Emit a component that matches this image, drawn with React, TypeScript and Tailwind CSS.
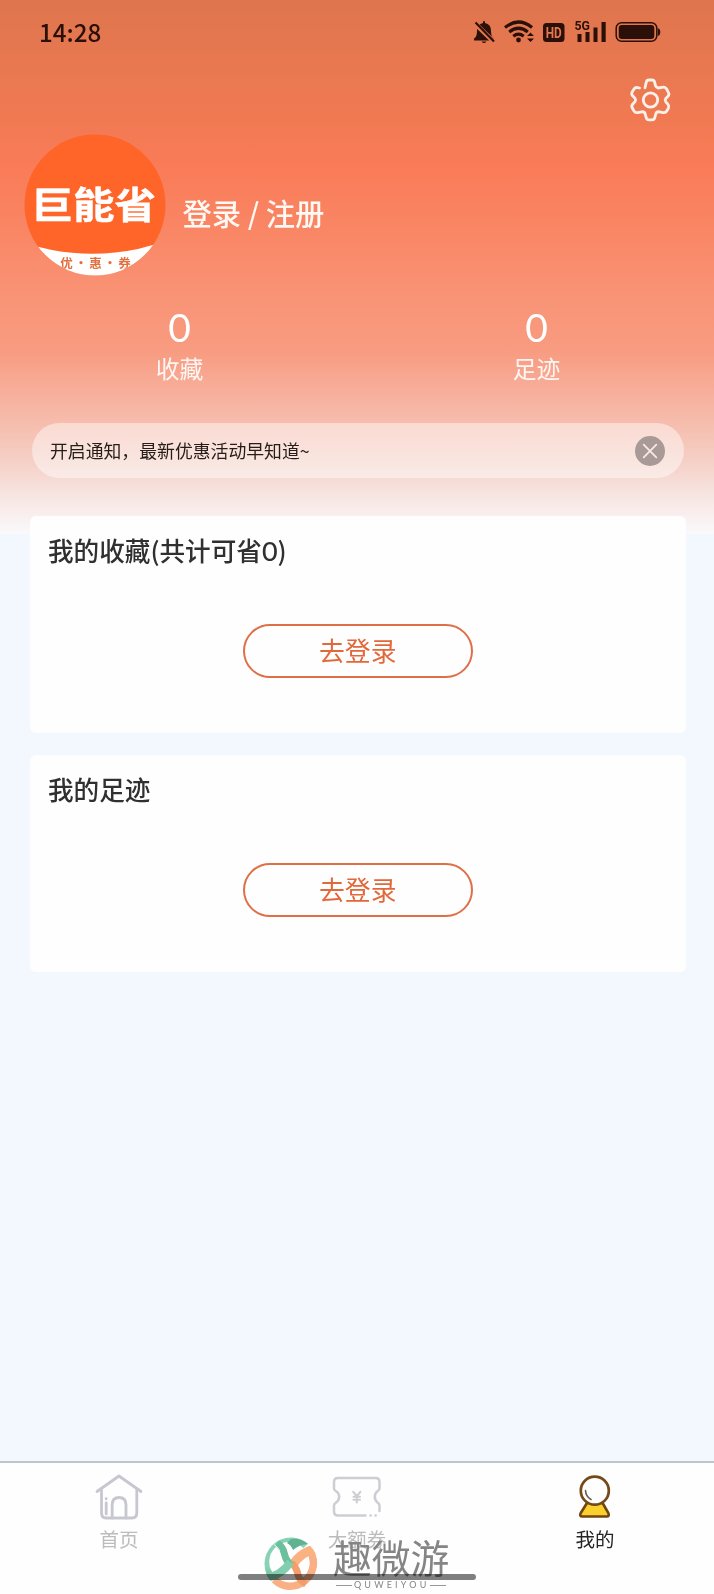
import { ReactNode } from 'react';

const GearIcon = () => (
  <svg width="44" height="44" viewBox="0 0 44 44" fill="none" stroke="#fdf1ea" strokeWidth="2.8" strokeLinecap="round" strokeLinejoin="round">
    <path d="M17 9.8 L18.2 4.4 Q18.7 2 21 2 H24 Q26.3 2 26.7 4.4 L27.3 7.2 Q28 9.6 30.4 10 L35.4 9.2 Q37.4 9 38.6 11 L40.4 14.4 Q41.6 16.4 40 18.2 L37.8 20.4 Q36.6 22 37.8 23.8 L40 26.4 Q41.4 28.2 40.4 30.2 L38.8 33 Q37.6 35 35.2 34.6 L31.4 33.8 Q28.6 33.4 27.8 36 L26.8 39.6 Q26.2 41.8 24 41.8 H21 Q18.8 41.8 18.2 39.6 L17.2 36 Q16.4 33.4 13.8 33.8 L9.6 34.6 Q7.2 35 6 33 L4.2 29.8 Q3.2 27.8 4.8 26 L7 23.6 Q8.2 22 7 20.2 L4.6 17.8 Q3 16 4.2 14 L6 11 Q7.2 9.2 9.6 9.6 L11.6 10" />
    <circle cx="22.5" cy="22" r="7.2" />
  </svg>
);

const StatusIcons = () => (
  <svg width="190" height="28" viewBox="0 -2 190 28" fill="#2b1009">
    <path d="M1 20.5 V18.5 Q4 17 4 11 Q4 4 10 3 V1.5 Q11 .5 12 1.5 V3 Q18 4 18 11 Q18 17 21 18.5 V20.5 Z" />
    <path d="M8.5 21.5 h5 q-2.5 3 -5 0z" />
    <path d="M2 3.5 L20.5 21.5" stroke="#e6784f" strokeWidth="4.6" />
    <path d="M2.5 2.5 L21 21.5" stroke="#2b1009" strokeWidth="2.2" />
    <g fill="none" stroke="#2b1009" strokeWidth="3.2">
      <path d="M32 7.5 Q45.5 -3.5 59 7.5" />
      <path d="M36.2 12 Q45.5 4.5 54.8 12" />
      <path d="M40.3 16.2 Q45.5 12.2 50.7 16.2" />
    </g>
    <circle cx="45.5" cy="20" r="2.4" />
    <path d="M54 16 L57.5 12.5 L61 16 Z M54 18.5 L57.5 22 L61 18.5 Z" />
    <rect x="70" y="3" width="21.5" height="19" rx="3.5" />
    <text x="80.7" y="17.5" textAnchor="middle" fontSize="14" fontWeight="700" textLength="16" lengthAdjust="spacingAndGlyphs" fill="#e6784f" className="font-['Roboto',sans-serif]">HD</text>
    <text x="101.5" y="9.8" fontSize="13.5" fontWeight="700" textLength="15.5" lengthAdjust="spacingAndGlyphs" className="font-['Roboto',sans-serif]">5G</text>
    <path d="M104.5 14 h4 v8 h-4z M112.5 12 h4 v10 h-4z M120.5 7.5 h4 v14.5 h-4z M128.5 2 h4.2 v20 h-4.2z" />
    <rect x="143.2" y="2.7" width="40.6" height="18.6" rx="5.5" fill="none" stroke="#2b1009" strokeWidth="1.5" />
    <rect x="145.7" y="5" width="35.6" height="14" rx="3.2" />
    <path d="M184.8 8 q2.6 1 2.6 4 t-2.6 4z" />
  </svg>
);

const HomeIcon = () => (
  <svg width="48" height="46" viewBox="0 0 48 46" fill="none" stroke="#c7c7d1" strokeWidth="2.8" strokeLinecap="round" strokeLinejoin="round">
    <path d="M2 17.5 L24 2 L46 17.5" />
    <path d="M6.5 16 V38.5 Q6.5 44 11 44 H37 Q41.8 44 41.8 38.5 V16" />
    <path d="M17.2 44 V31 Q17.2 23.5 24 23.5 Q31 23.5 31 31 V44" />
    <path d="M11.2 29 V40" />
    <path d="M11.2 24.6 V24.8" />
  </svg>
);

const CouponIcon = () => (
  <svg width="50" height="42" viewBox="0 0 50 42" fill="none" stroke="#cdcdd3" strokeWidth="2.5" strokeLinecap="round" strokeLinejoin="round">
    <path d="M33.5 39.5 H6 Q2 39.5 2 35.5 V29.5 Q2 28 3.5 27 Q7.2 24.4 7.2 20.8 Q7.2 17 3.5 14.8 Q2 13.8 2 12.5 V6 Q2 2 6 2 H43.5 Q47.5 2 47.5 6 V12.5 Q47.5 13.8 46 14.8 Q42.8 17 42.8 20.8 Q42.8 24.4 46 27 Q47.5 28 47.5 29.5 V35" />
    <path d="M38.5 39.5 h.2 M43.5 39.5 h.2" />
    <path d="M21.2 15.8 L24.8 20.2 L28.4 15.8 M24.8 20.5 V26.5 M21.5 20.8 H28 M21.5 23.8 H28" strokeWidth="2.1" />
  </svg>
);

const MineIcon = () => (
  <svg width="34" height="44" viewBox="0 0 34 44" fill="none" strokeLinejoin="round">
    <path d="M9 28 L2.6 38.2 Q1.3 41.5 4.3 41.5 H28.7 Q31.7 41.5 30.4 38.2 L24.6 28 Z" fill="#fbd02c" stroke="#6f4510" strokeWidth="2.6" />
    <circle cx="16.8" cy="15.7" r="14" fill="#fff" stroke="#75491a" strokeWidth="2.7" />
    <path d="M7.5 15.5 Q7.8 21.5 13 24.5" stroke="#6b5a4c" strokeWidth="1.6" strokeLinecap="round" />
  </svg>
);

const Swirl = () => (
  <svg width="54" height="54" viewBox="0 0 54 54" fill="none">
    <defs>
      <linearGradient id="green" gradientUnits="userSpaceOnUse" x1="10" y1="4" x2="16" y2="46">
        <stop offset="0" stopColor="#86d3b3" />
        <stop offset=".6" stopColor="#8ad2b6" />
        <stop offset="1" stopColor="#5fa888" />
      </linearGradient>
      <clipPath id="disc">
        <circle cx="27" cy="27" r="26.5" />
      </clipPath>
    </defs>
    <g clipPath="url(#disc)">
      {/* orange half */}
      <path d="M46 13.5 A23.5 23.5 0 0 1 10 43" stroke="#f9b084" strokeWidth="7.5" />
      <path d="M53 12 Q37 14 28 29" stroke="#fbb283" strokeWidth="9" />
      <path d="M27.5 26 Q33 31 34 38 Q36 44 42 47" stroke="#f39c6c" strokeWidth="7" />
      {/* green half */}
      <path d="M8 41 A23.5 23.5 0 0 1 42 8.5" stroke="url(#green)" strokeWidth="7.5" />
      <path d="M27 2 Q37 1 44 7 Q36 7 29 13 Q27 8 23 6 Z" fill="#5fb391" />
      <path d="M13 6 Q19 10 20.5 17 Q22 24 27 28" stroke="#6abf9c" strokeWidth="7" />
      <path d="M1 41 Q17 39 26.5 25" stroke="#84ceb0" strokeWidth="8" />
      <path d="M10 7.5 Q14 10 16 14" stroke="#e3f5ed" strokeWidth="1" />
    </g>
  </svg>
);

const Avatar = () => (
  <svg width="142" height="142" viewBox="0 0 142 142">
    <defs>
      <clipPath id="avatar">
        <circle cx="71" cy="71" r="70.5" />
      </clipPath>
    </defs>
    <g clipPath="url(#avatar)">
      <rect width="142" height="142" fill="#ff6428" />
      <path d="M0 109 Q14 113 28 116 Q71 124 114 115 Q128 112 142 106 V142 H0 Z" fill="#fff" />
      <text x="7.5" y="85" fontSize="37" fontWeight="700" fill="#fff" stroke="#fff" strokeWidth=".4" textLength="124.5" lengthAdjust="spacingAndGlyphs">巨能省</text>
      <g fontSize="12.5" fontWeight="700" fill="#e0703f" textAnchor="middle">
        <text x="42.5" y="134">优</text>
        <text x="57" y="134">·</text>
        <text x="71.5" y="134">惠</text>
        <text x="86" y="134">·</text>
        <text x="100.5" y="134">券</text>
      </g>
    </g>
  </svg>
);

const Stat = ({ value, label }: { value: number; label: string }) => (
  <div className="flex w-1/2 flex-col items-center pl-0.5 text-white">
    <span className="text-[39px] leading-[42px] font-['Lato',sans-serif]">{value}</span>
    <span className="mt-[5px] text-[23.8px] leading-[30px] opacity-90">{label}</span>
  </div>
);

const Card = ({ title }: { title: ReactNode }) => (
  <section className="flex h-[217px] flex-col items-center rounded-md bg-[#fefefe]">
    <h2 className="mt-[18px] w-full pl-[18.5px] text-[25.6px] leading-[32px] font-medium text-[#303030]">{title}</h2>
    <button className="mt-[58px] flex h-[54px] w-[230px] items-center justify-center rounded-full border-2 border-[#de6f47] pb-[3px] text-[25.8px] leading-none text-[#e2683a]">
      去登录
    </button>
  </section>
);

const Tab = ({ label, icon, active }: { label: string; icon: ReactNode; active?: boolean }) => (
  <div className="flex w-1/3 flex-col items-center pt-2.5">
    <div className="flex h-[48px] items-center">{icon}</div>
    <span className={`mt-[5px] text-[19.5px] leading-[26px] ${active ? 'text-[#252525]' : 'text-[#bcbcbc]'}`}>{label}</span>
  </div>
);

const App = () => {
  return (
    <div className="relative flex h-[1594px] w-[714px] flex-col overflow-hidden bg-[#f3f7fe] font-['Noto_Sans_CJK_SC',sans-serif]">
      <header className="h-[534px] shrink-0 bg-[linear-gradient(180deg,#de754e_0px,#e77850_60px,#f07952_115px,#fa7c58_170px,#f98665_230px,#f99375_295px,#f89b80_350px,#f7b09d_395px,#f6beae_425px,#f5d2c9_465px,#f6e2dd_490px,#f9efef_515px,#faf9fb_534px)]">
        <div className="flex h-[64px] items-center justify-between pr-[51px] pl-[39px]">
          <span className="text-[24.2px] leading-none font-medium text-[#2b1009]">14:28</span>
          <StatusIcons />
        </div>
        <div className="flex h-[70px] justify-end pt-[14px] pr-[42px]">
          <GearIcon />
        </div>
        <div className="flex items-center pl-[23.5px]">
          <Avatar />
          <span className="mt-[13px] ml-[17px] text-[29.3px] leading-[40px] font-medium whitespace-pre text-[#fff8f3]">登录 / 注册</span>
        </div>
        <div className="mt-[30px] flex">
          <Stat value={0} label="收藏" />
          <Stat value={0} label="足迹" />
        </div>
        <div className="mt-[40px] ml-[32px] flex h-[55px] w-[652px] items-center justify-between rounded-full bg-white/45 pr-[19px] pl-[18px]">
          <span className="text-[17.85px] leading-none text-[#261c1a]">开启通知，最新优惠活动早知道~</span>
          <svg width="30" height="30" viewBox="0 0 30 30">
            <circle cx="15" cy="15" r="15" fill="#a99a97" />
            <path d="M8.7 8.7 L21.3 21.3 M21.3 8.7 L8.7 21.3" stroke="#f8e9e6" strokeWidth="1.8" strokeLinecap="round" />
          </svg>
        </div>
      </header>

      <main className="-mt-[18px] flex flex-1 flex-col gap-[22px] pr-[28px] pl-[29.5px]">
        <Card
          title={
            <>
              我的收藏(共计可省<span className="text-[27px] leading-none font-['Lato',sans-serif]">0</span>)
            </>
          }
        />
        <Card title="我的足迹" />
      </main>

      <nav className="flex h-[133px] shrink-0 border-t-2 border-[#c1c4cc] bg-[#fefefe]">
        <Tab label="首页" icon={<HomeIcon />} />
        <Tab label="大额券" icon={<CouponIcon />} />
        <Tab label="我的" icon={<MineIcon />} active />
      </nav>

      {/* watermark over the tab bar */}
      <div className="absolute top-[1537px] left-[264px] flex">
        <Swirl />
        <div className="ml-[15px] flex flex-col items-center text-[#858585]">
          <span className="-mt-[3px] text-[38.8px] leading-[44px]">趣微游</span>
          <div className="mt-[3px] flex items-center">
            <i className="h-px w-4 bg-[#999]" />
            <span className="mr-px ml-0.5 text-[9px] leading-[8px] tracking-[3.2px] font-['Lato',sans-serif]">QUWEIYOU</span>
            <i className="h-px w-4 bg-[#999]" />
          </div>
        </div>
      </div>
      <div className="absolute top-[1574px] left-[238px] h-1.5 w-[238px] rounded-full bg-black/50 mix-blend-multiply" />
    </div>
  );
};

export default App;
